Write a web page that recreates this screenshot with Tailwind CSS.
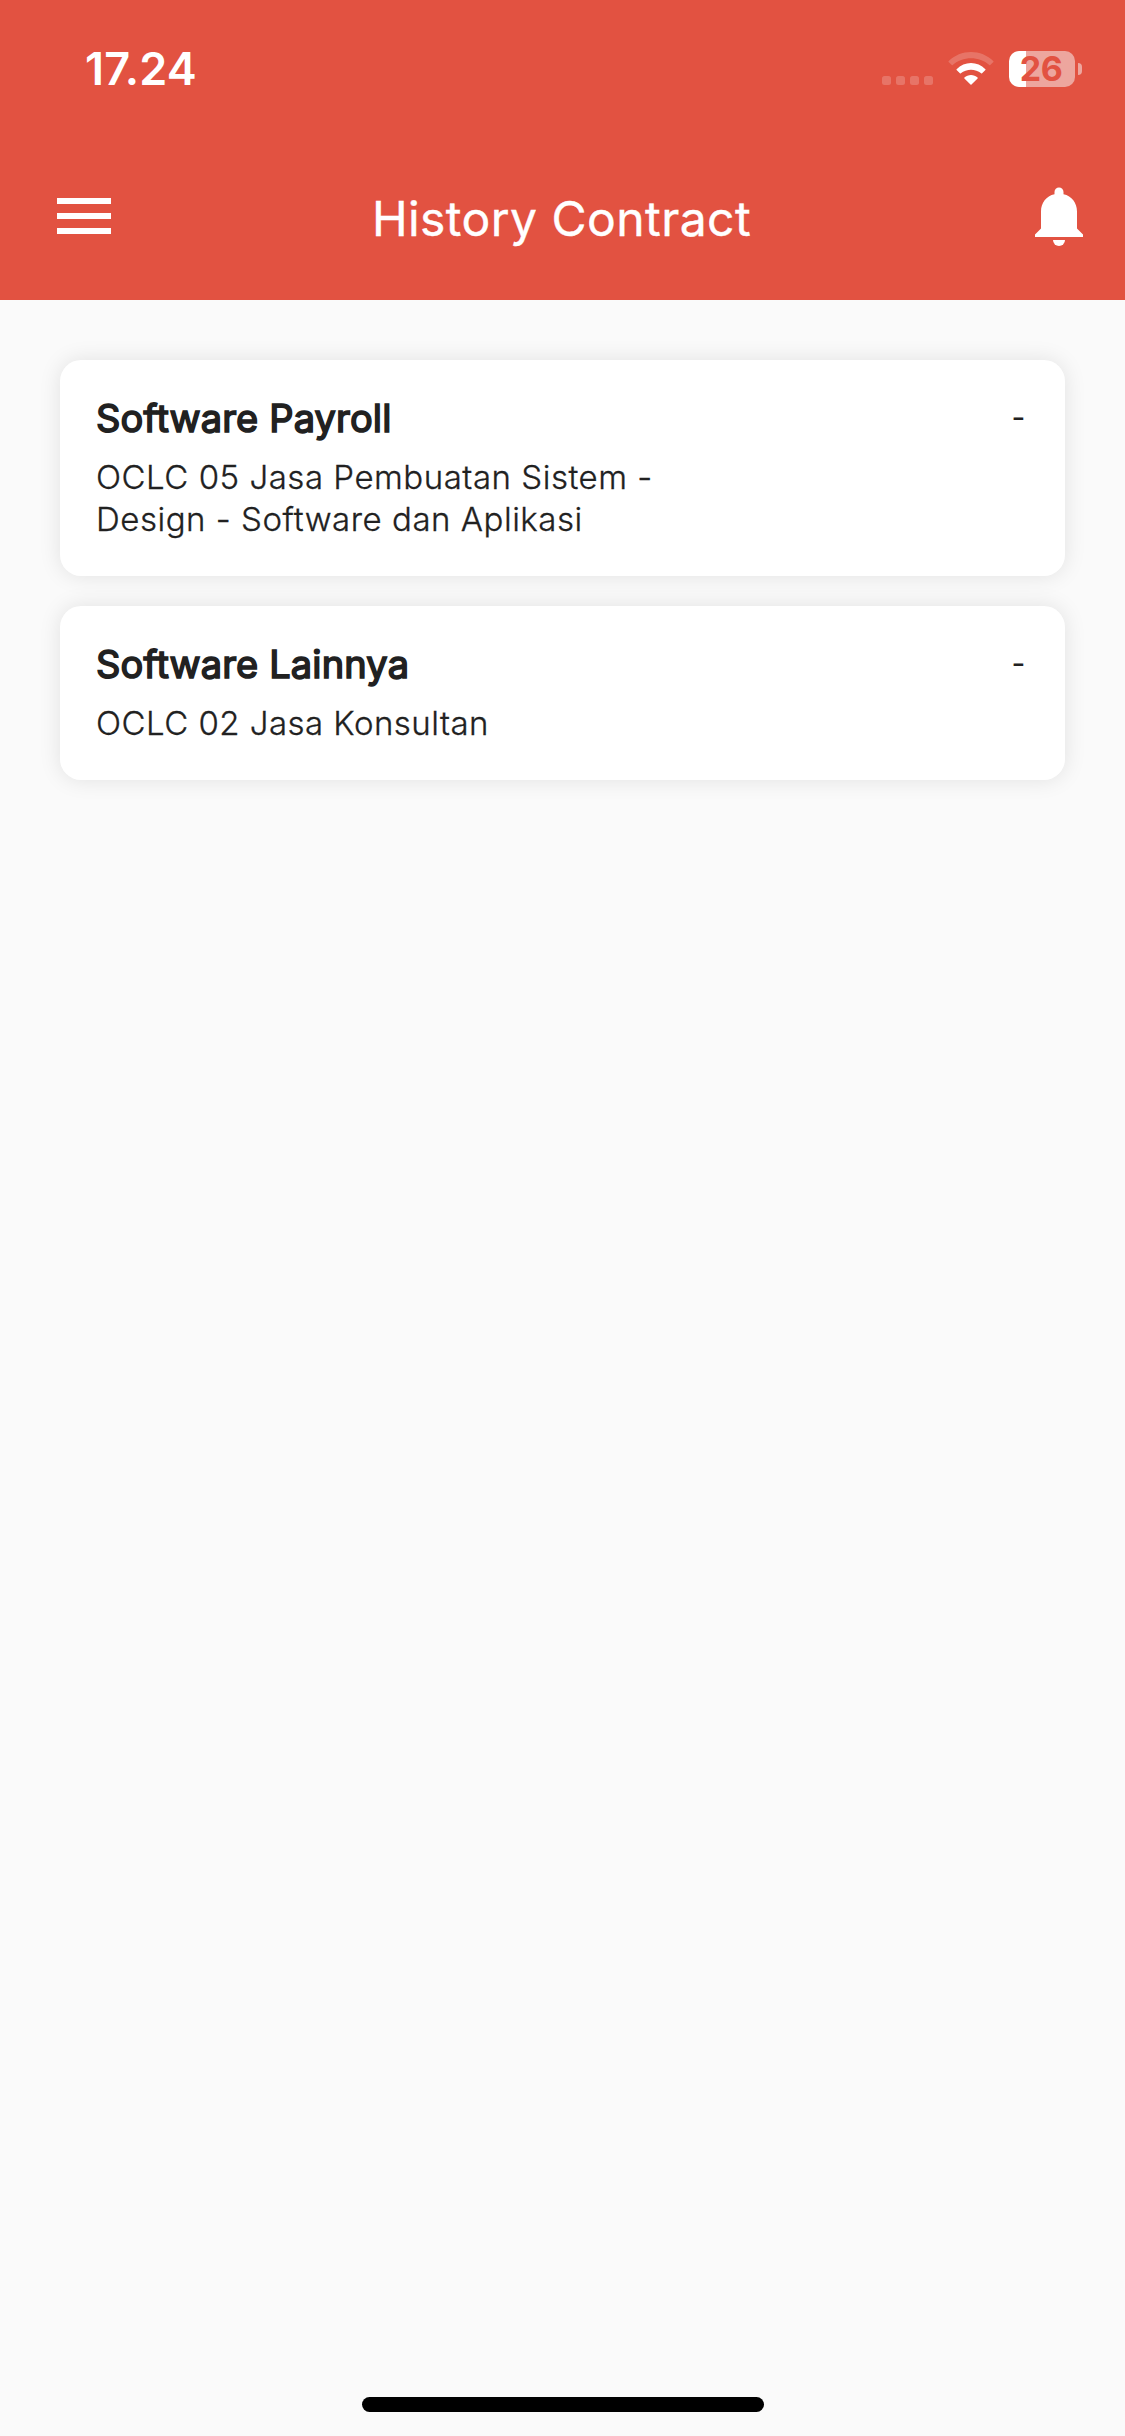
<!doctype html>
<html lang="id">

<head>
    <meta charset="UTF-8">
    <meta name="viewport" content="width=device-width, initial-scale=1.0">
    <title>History Contract</title>
    <script src="https://cdn.jsdelivr.net/npm/@tailwindcss/browser@4"></script>
</head>

<body class="bg-[#fafafa] font-['Inter',sans-serif] text-[#212121]">
    <div class="flex flex-col h-[2436px] w-[1125px] overflow-hidden">

        <header class="h-[300px] bg-[#e25241] text-white">
            <!-- status bar -->
            <div class="flex justify-between items-center h-[132px] pt-[6px] pl-[85px] pr-[43px]">
                <span class="-mt-px text-[45px] font-semibold leading-none tracking-[0.2px]">17.24</span>
                <div class="flex items-center">
                    <svg class="w-[51px] h-9" viewBox="0 0 51 36" fill="#fff" fill-opacity=".2">
                        <rect x="0" y="25" width="9" height="9" rx="2.5" />
                        <rect x="14" y="25" width="9" height="9" rx="2.5" />
                        <rect x="28" y="25" width="9" height="9" rx="2.5" />
                        <rect x="42" y="25" width="9" height="9" rx="2.5" />
                    </svg>
                    <svg class="w-[46px] h-9 ml-[15px]" viewBox="0 0 46 36" fill="#fff">
                        <path fill-opacity=".2" d="M.6 10.2C12.5-2.2 33.5-2.2 45.4 10.2Q45.8 10.6 45.4 11L42.2 14.1Q41.8 14.5 41.3 14.1C31.5 5 14.5 5 4.7 14.1Q4.2 14.5 3.8 14.1L.6 11Q.2 10.6 .6 10.2Z" />
                        <path d="M8.6 18.2C16.5 9.8 29.5 9.8 37.4 18.2Q37.8 18.6 37.4 19L34.1 22.2Q33.6 22.6 33.2 22.2C27.5 17.5 18.5 17.5 12.8 22.2Q12.4 22.6 11.9 22.2L8.6 19Q8.2 18.6 8.6 18.2Z" />
                        <path d="M16.4 26.6C20 23 26 23 29.6 26.6Q30 27 29.6 27.4L23.5 33.5Q23 34 22.5 33.5L16.4 27.4Q16 27 16.4 26.6Z" />
                    </svg>
                    <!-- battery, 26% -->
                    <div class="flex justify-center items-center w-[66px] h-9 ml-[15px] rounded-[10px] bg-linear-to-r from-white from-[26%] to-[#eda69e] to-[26%]">
                        <span class="pr-[2px] text-[34px] font-bold leading-none text-[#e25241] tracking-[-0.5px]">26</span>
                    </div>
                    <div class="w-1 h-3 ml-[3px] rounded-r-full bg-[#eda69e]"></div>
                </div>
            </div>

            <!-- app bar -->
            <nav class="flex justify-between items-center h-[168px] pl-[57px] pr-[42px]">
                <div class="flex flex-col gap-[9px] w-[54px]">
                    <div class="h-[6px] bg-white"></div>
                    <div class="h-[6px] bg-white"></div>
                    <div class="h-[6px] bg-white"></div>
                </div>
                <h1 class="pt-[5px] pr-[23px] text-[48px] leading-[56px] tracking-[0.45px] [-webkit-text-stroke:0.4px_#fff]">History Contract</h1>
                <svg class="w-12 h-[60px]" viewBox="0 0 48 60" fill="#fff">
                    <path d="M19.500 8.200V6A4.500 4.500 0 0 1 28.500 6V8.200C36.800 9.800 42 16.800 42 25.500V42.500L48 48.600V51H0V48.600L6 42.500V25.500C6 16.800 11.200 9.800 19.500 8.200Z" />
                    <path d="M18 54H30A6 6 0 0 1 18 54Z" />
                </svg>
            </nav>
        </header>

        <main class="flex flex-col grow gap-[30px] px-[60px] pt-[60px]">
            <div class="flex justify-between items-start p-9 rounded-[21px] bg-white shadow-[0_0_22px_rgba(0,0,0,0.1)]">
                <div class="w-[600px]">
                    <h2 class="text-[38px] leading-[44px] tracking-[0.15px] [-webkit-text-stroke:1.6px_#212121]">Software Payroll</h2>
                    <p class="mt-[16px] text-[33px] font-light leading-[42px] tracking-[0.52px] [-webkit-text-stroke:0.3px_#212121]">OCLC 05 Jasa Pembuatan Sistem - Design - Software dan Aplikasi</p>
                </div>
                <span class="text-[30px] leading-[43px] tracking-[0.75px] mr-[3px]">-</span>
            </div>

            <div class="flex justify-between items-start p-9 rounded-[21px] bg-white shadow-[0_0_22px_rgba(0,0,0,0.1)]">
                <div class="w-[600px]">
                    <h2 class="text-[38px] leading-[44px] tracking-[0.15px] [-webkit-text-stroke:1.6px_#212121]">Software Lainnya</h2>
                    <p class="mt-[16px] text-[33px] font-light leading-[42px] tracking-[0.47px] [-webkit-text-stroke:0.3px_#212121]">OCLC 02 Jasa Konsultan</p>
                </div>
                <span class="text-[30px] leading-[43px] tracking-[0.75px] mr-[3px]">-</span>
            </div>
        </main>

        <!-- home indicator -->
        <div class="w-[402px] h-[15px] mx-auto mb-6 rounded-full bg-black"></div>
    </div>
</body>

</html>
